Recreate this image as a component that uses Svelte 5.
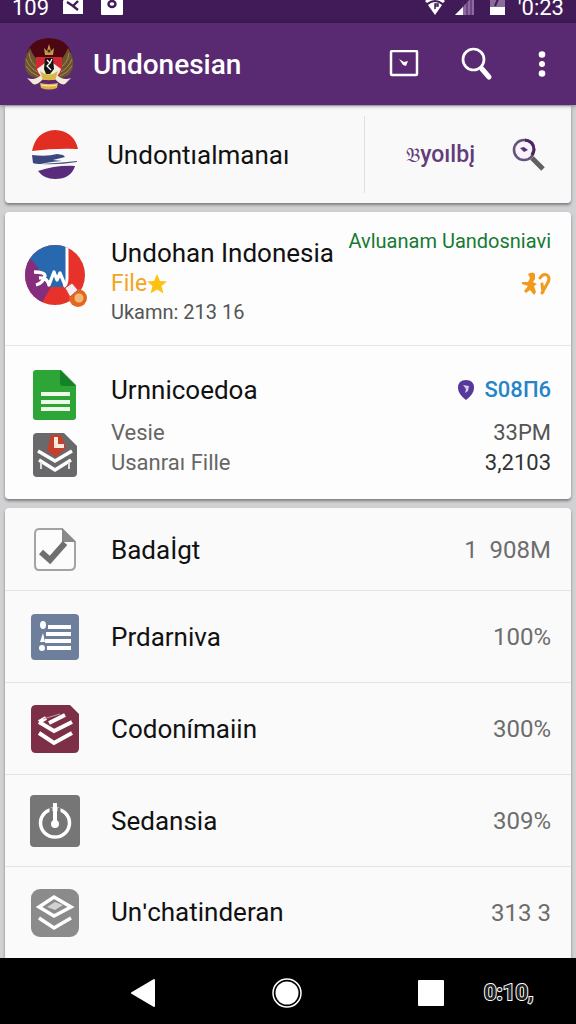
<script>
  const rows = [
    { icon: 'check', name: 'Badaİgt', value: '1  908M' },
    { icon: 'list', name: 'Prdarniva', value: '100%' },
    { icon: 'stack', name: 'Codonímaiin', value: '300%' },
    { icon: 'power', name: 'Sedansia', value: '309%' },
    { icon: 'layers', name: 'Unʹchatinderan', value: '313 3' },
  ];
</script>

<div class="screen">
  <div class="status">
    <span class="clock">109</span>
    <svg width="20" height="22" viewBox="0 0 20 22" aria-hidden="true">
      <path d="M5 1h15v20H0V8z" fill="#fff" />
      <path d="M4 9l6 4 5-5M10 13l5 4" stroke="#411a58" stroke-width="2.400" fill="none" />
    </svg>
    <svg class="second" width="22" height="22" viewBox="0 0 22 22" aria-hidden="true">
      <rect width="22" height="22" rx="1" fill="#fff" />
      <ellipse cx="11" cy="11" rx="3.5" ry="3" fill="none" stroke="#411a58" stroke-width="2.4" />
    </svg>
    <span class="fill"></span>
    <svg width="20" height="22" viewBox="0 0 20 22" aria-hidden="true">
      <path d="M0 8Q10-1 20 8l-2 2Q10 4 2 10z" fill="#fff" />
      <path d="M3 12q7-6 14 0l-7 10z" fill="#fff" />
      <path d="M10 16v-5h3v2h-3" stroke="#411a58" stroke-width="1.5" fill="none" />
    </svg>
    <svg class="signal" width="19" height="22" viewBox="0 0 19 22" aria-hidden="true">
      <path d="M0 22L19 2v20z" fill="#8d6b9f" />
      <path d="M0 22l8-8v8z" fill="#fff" />
      <path d="M8 8v6M12 4v18M16 2v20" stroke="#4d2665" />
    </svg>
    <svg class="battery" width="15" height="22" viewBox="0 0 15 22" aria-hidden="true">
      <path d="M0 0h15v14H0z" fill="#8b6b9b" />
      <path d="M8 6l-3 7" stroke="#411a58" stroke-width="2" />
      <path d="M0 14h15v8H0z" fill="#fff" />
    </svg>
    <span class="clock">'0:23</span>
  </div>

  <header>
    <svg class="crest" width="52" height="54" viewBox="0 0 52 54" aria-hidden="true">
      <path d="M4 16Q8 2 26 1q18 1 22 15L38 34H14z" fill="#4d0712" />
      <path d="M7 11Q-3 27 6 38l12 5 2-16q-9-5-13-16z" fill="#6d5430" />
      <path d="M45 11q10 16 1 27l-12 5-2-16q9-5 13-16z" fill="#6d5430" />
      <path d="M6 16q1 11 11 16M3 22q3 9 13 14M3 29q4 7 12 10M46 16q-1 11-11 16M49 22q-3 9-13 14M49 29q-4 7-12 10" fill="none" stroke="#a58b4c" stroke-width="1" />
      <path d="M21 11l3 3 2-7 2 7 3-3-1 7h-8z" fill="#c29a4c" />
      <circle cx="26" cy="14" r="1.500" fill="#5a2215" />
      <path d="M13 20h26v12q-2 9-13 12-11-3-13-12z" fill="#d52636" />
      <path d="M14 32l8-6h8l8 6q-2 8-12 11-10-3-12-11z" fill="#f3eee2" />
      <path d="M22 21h8l1 11-4 5h-4l-2-5z" fill="#171415" />
      <path d="M24 23l3 3-3 3 4 4M29 22l-2 4" stroke="#fff" stroke-width="1.3" fill="none" />
      <path d="M17 34q9 7 18 0l-3 9H20z" fill="#d7b846" />
      <path d="M4 41q8 3 14-3l2 4q-6 7-10 5zM48 41q-8 3-14-3l-2 4q6 7 10 5z" fill="#f2e9d7" />
      <path d="M17 46q9 2 18 0l-1 5q-8 3-16 0z" fill="#ddb348" />
      <path d="M18 48q8 2 16 0" stroke="#fff0ba" fill="none" />
    </svg>
    <h1>Undonesian</h1>
    <button class="box" aria-label="Inbox">
      <svg width="30" height="28" viewBox="0 0 30 28"><rect x="2" y="1" width="26" height="24" rx="1" fill="none" stroke="#fff" stroke-width="2.5" /><path d="M10 9l5 3 4-1-2 5-3-1z" fill="#fff" /></svg>
    </button>
    <button class="find" aria-label="Search">
      <svg width="32" height="34" viewBox="0 0 32 34"><circle cx="12.500" cy="12.500" r="10.500" fill="none" stroke="#fff" stroke-width="2.700" /><path d="M19 20l2 2" stroke="#fff" stroke-width="3" /><path d="M21 22l7 8" stroke="#fff" stroke-width="5" stroke-linecap="round" /></svg>
    </button>
    <button class="more" aria-label="More options">
      <svg width="8" height="28" viewBox="0 0 8 28"><g fill="#fff"><circle cx="4" cy="4.500" r="3.300" /><circle cx="4" cy="14" r="3" /><circle cx="4" cy="23.500" r="3.300" /></g></svg>
    </button>
  </header>

  <main>
    <section class="card search">
      <svg class="logo" width="46" height="50" viewBox="0 0 46 50" aria-hidden="true">
        <path d="M0 21Q4 1 23 0q19 1 23 19-23-1-46 2z" fill="#e22e22" />
        <path d="M0 25q15 2 25-1l6 1 2 2-12 3 9 1q-13 1-21 3Q3 34 1 33z" fill="#3c477f" />
        <path d="M9 34q18-1 36-3v1q-18 3-36 2z" fill="#4b5280" />
        <path d="M6 41q18-6 37-5-4 13-20 13-11 0-17-8z" fill="#582b7c" />
      </svg>
      <span class="query">Undontıalmanaı</span>
      <span class="word"><i>𝔅</i>yoılbį</span>
      <button aria-label="Search files">
        <svg width="34" height="34" viewBox="0 0 34 34"><path d="M20 20l11 11" stroke="#626063" stroke-width="5" /><circle cx="12" cy="12" r="10" fill="#f8f3fb" stroke="#65547c" stroke-width="2.600" /><path d="M13 2q9 1 9 10l-2 5" fill="none" stroke="#4b2461" stroke-width="3" /><path d="M8 10l4-1 4 3-4 2z" fill="#5b3177" /></svg>
      </button>
    </section>

    <section class="card">
      <article class="file">
        <div class="art">
          <svg class="app" width="64" height="66" viewBox="0 0 64 66" aria-hidden="true">
            <defs><clipPath id="disc"><circle cx="30" cy="31" r="30" /></clipPath></defs>
            <g clip-path="url(#disc)">
              <path d="M0 0h60v62H0z" fill="#e7312b" />
              <path d="M0 0h42v43H26L0 18z" fill="#2868ae" />
              <path d="M0 12l8 5 18 26-11 19H0z" fill="#862d7e" />
              <path d="M42 0v34q0 6-3 9" stroke="#fff" stroke-width="3" fill="none" />
            </g>
            <path d="M9 28q11 0 11 4-2 7-9 9M14 34q8-1 10 7l5-13 3 8 3-7 5 12" fill="none" stroke="#fff" stroke-width="3.300" stroke-linejoin="round" />
            <circle cx="53" cy="54" r="9" fill="#e16822" /><circle cx="54" cy="54" r="4.500" fill="#f3b878" />
            <path d="M40 44l7-5 6 7-8 7z" fill="#f8edf0" stroke="#c94c3c" />
          </svg>
        </div>
        <div class="info">
          <h2>Undohan Indonesia</h2>
          <p class="tag">File<svg width="20" height="20" viewBox="0 0 20 20" aria-hidden="true"><path d="M10 0l3 7 7 .5-5.500 4.500 2 7.500L10 15.500 3.500 19.500l2-7.500L0 7.500 7 7z" fill="#fcc313" /></svg></p>
          <p class="meta">Ukamn: 213 16</p>
        </div>
        <div class="side">
          <span class="green">Avluanam Uandosniavi</span>
          <svg width="29" height="24" viewBox="0 0 29 24" role="img" aria-label="37"><path d="M6 2q5-3 7 0v5l-2 3 4 2-3 2 2 6-2 3-4-5-4 3-2-2 4-5-6-2v-2h6l2-4z" fill="#f09b1c" /><path d="M18 6q3-5 7-3 4 3 0 9l-5 9M20 12l1 8" fill="none" stroke="#f09b1c" stroke-width="3" stroke-linecap="round" /></svg>
        </div>
      </article>
      <article class="file detail">
        <div class="art">
          <svg width="44" height="50" viewBox="0 0 44 50" aria-hidden="true"><path d="M3 0h25l15 15v32q0 3-3 3H3q-3 0-3-3V3q0-3 3-3z" fill="#2da537" /><path d="M27 0l16 16H30q-3 0-3-3z" fill="#16812a" /><path d="M8 24h29M8 32h29M8 39h29" stroke="#effbea" stroke-width="4" /></svg>
          <svg width="44" height="46" viewBox="0 0 44 46" aria-hidden="true"><path d="M4 1h27l13 13v27q0 4-4 4H4q-4 0-4-4V5q0-4 4-4z" fill="#69696b" /><path d="M18 3h10l5 13-10 9-9-6z" fill="#c63f2c" /><path d="M23 5v9h8" stroke="#ffe9d8" stroke-width="4" fill="none" /><path d="M5 19l17 10 17-10M6 28l16 10 16-10" stroke="#fff" stroke-width="3.500" fill="none" /><path d="M8 30v7M36 30v7" stroke="#ddd" stroke-width="2" /></svg>
        </div>
        <div class="info">
          <h2>Urnnicoedoa</h2>
          <p>Vesie</p>
          <p>Usanraı Fille</p>
        </div>
        <div class="side">
          <span class="blue"><svg width="18" height="22" viewBox="0 0 18 22" aria-hidden="true"><path d="M9 1q8 0 8 8 0 6-8 12Q1 15 1 9q0-8 8-8z" fill="#55399b" /><path d="M6 6l6 1-1 5-3 2 1-4z" fill="#d9cbed" /></svg>S08П6</span>
          <span>33PM</span>
          <span class="dark">3,2103</span>
        </div>
      </article>
    </section>

    <ul class="card list">
      {#each rows as row}
        <li>
          <span class="art">
            {#if row.icon === 'check'}
              <svg width="44" height="46" viewBox="0 0 44 46" aria-hidden="true"><path d="M6 2h23l13 13v23q0 5-5 5H6q-4 0-4-5V7q0-5 4-5z" fill="#fcfcfc" stroke="#a3a3a3" stroke-width="2" /><path d="M29 1l14 14H29z" fill="#898989" /><path d="M8 25l9 8 15-17" fill="none" stroke="#6f6f6f" stroke-width="6" /></svg>
            {:else if row.icon === 'list'}
              <svg width="48" height="46" viewBox="0 0 48 46" aria-hidden="true"><rect width="48" height="46" rx="4" fill="#6e7f9c" /><path d="M17 13h23M15 20h25M14 27h26M16 34h24" stroke="#fff" stroke-width="4" /><ellipse cx="12" cy="11" rx="3" ry="4" fill="#fff" /><path d="M12 19l-3 9h5z" fill="#fff" /><circle cx="11" cy="34" r="3" fill="#fff" /></svg>
            {:else if row.icon === 'stack'}
              <svg width="48" height="48" viewBox="0 0 48 48" aria-hidden="true"><path d="M5 0h34l9 9v34q0 5-5 5H5q-5 0-5-5V5q0-5 5-5z" fill="#7d2f48" /><path d="M8 17l15 9 18-9M8 28l15 10 18-10" stroke="#fff" stroke-width="4" fill="none" /><path d="M18 18l16-8M8 17l7-4" stroke="#fff" stroke-width="4" /><path d="M12 14l17-5" stroke="#c99baa" /></svg>
            {:else if row.icon === 'power'}
              <svg width="50" height="52" viewBox="0 0 50 52" aria-hidden="true"><rect width="50" height="52" rx="4" fill="#767676" /><ellipse cx="25" cy="28" rx="14.500" ry="14" stroke="#fff" stroke-width="3.500" fill="none" /><path d="M21 13v8M29 13v8" stroke="#767676" stroke-width="3" /><path d="M25 8v20" stroke="#fff" stroke-width="4" /><circle cx="25" cy="29" r="4" fill="#fff" /></svg>
            {:else}
              <svg width="48" height="48" viewBox="0 0 48 48" aria-hidden="true"><rect width="48" height="48" rx="9" fill="#8b8b8b" /><path d="M8 18L23 8l17 10-17 9zM8 29l15 10 17-10" fill="none" stroke="#fff" stroke-width="3.500" /><path d="M16 18l8-5 8 3-8 5z" fill="#d2d2d2" /></svg>
            {/if}
          </span>
          <span class="name">{row.name}</span>
          <span class="value">{row.value}</span>
        </li>
      {/each}
    </ul>
  </main>

  <nav>
    <button aria-label="Back"><svg width="26" height="30" viewBox="0 0 26 30"><path d="M2 15L24 2v26z" fill="#fff" stroke="#fff" stroke-width="2" stroke-linejoin="round" /></svg></button>
    <button aria-label="Home"><svg width="32" height="32" viewBox="0 0 32 32"><circle cx="16" cy="16" r="14" fill="none" stroke="#fff" stroke-width="1.500" /><circle cx="16" cy="16" r="11.500" fill="#fff" /></svg></button>
    <button aria-label="Recent apps"><svg width="26" height="26" viewBox="0 0 26 26"><rect width="26" height="26" rx="1" fill="#fff" /></svg></button>
    <span class="count">0:10,</span>
  </nav>
</div>

<style>
  :global(body) { margin: 0; background: #d1d1d3; }
  .screen { box-sizing: border-box; min-height: 100vh; display: flex; flex-direction: column; font-family: Roboto, sans-serif; color: #111; }
  h1, h2, p, ul { margin: 0; padding: 0; font-weight: 400; }
  svg { display: block; flex: none; }
  button { border: 0; padding: 0; background: none; display: flex; cursor: pointer; }
  .status { height: 15px; padding: 0 12px 8px; overflow: hidden; display: flex; align-items: flex-end; background: #411a58; color: #fff; }
  .clock { font-size: 22px; line-height: 20px; margin-bottom: -3px; }
  .clock:first-child { width: 51px; }
  .second { margin-left: 18px; }
  .fill { flex: 1; }
  .signal { margin-left: 10px; }
  .battery { margin: 0 13px 0 16px; }
  header { height: 82px; padding: 0 30px 0 23px; display: flex; align-items: center; background: #592971; color: #fff; position: relative; box-shadow: 0 1px 4px #0006; }
  .crest { margin-right: 18px; }
  h1 { flex: 1; font-size: 28px; line-height: 36px; padding-top: 2px; font-weight: 500; }
  .find { margin: 0 45px 0 42px; }
  main { flex: 1; display: flex; flex-direction: column; gap: 9px; padding: 1px 5px 0; }
  .card { background: #fdfdfd; border-radius: 4px; box-shadow: 0 2px 3px #0006; }
  .search { height: 97px; display: flex; align-items: center; padding: 0 25px 0 27px; border-radius: 0 0 4px 4px; background: #f9f9f9; }
  .logo { margin-right: 29px; }
  .query { flex: 1; font-size: 26px; }
  .word { height: 77px; padding-left: 41px; margin-right: 37px; border-left: 1px solid #e0e0e0; display: flex; align-items: center; font-size: 23px; font-weight: 500; color: #643c7c; }
  .word i { font: 20px "DejaVu Sans", sans-serif; }
  .file { display: flex; padding: 25px 20px 20px 26px; border-bottom: 1px solid #e6e6e8; }
  .detail { padding-top: 28px; border: 0; padding-bottom: 21px; }
  .art { width: 48px; margin-right: 32px; display: flex; flex: none; flex-direction: column; align-items: center; }
  .app { margin: 7px 0 0 4px; }
  .info { flex: 1; white-space: nowrap; }
  h2 { font-size: 26px; line-height: 32px; }
  .tag { display: flex; align-items: center; font-size: 23px; line-height: 30px; color: #f3a51d; }
  .meta { font-size: 20px; line-height: 26px; color: #555; }
  .side { display: flex; flex-direction: column; align-items: flex-end; white-space: nowrap; }
  .green { margin: -11px 0 16px -100px; font-size: 20px; line-height: 30px; color: #167a32; }
  .detail .art { margin-top: -4px; gap: 12px; }
  .detail h2, .blue { margin-bottom: 12px; }
  .detail p, .side span { line-height: 30px; }
  .detail p { font-size: 22px; color: #666; }
  .detail .side { font-size: 22px; color: #555; }
  .detail .blue { display: flex; align-items: center; gap: 10px; line-height: 32px; font-weight: 500; color: #2585c8; }
  .detail .dark { color: #333; }
  .list { flex: 1; display: grid; grid-template-rows: 82px repeat(4, minmax(91px, 1fr)); list-style: none; border-radius: 4px 4px 0 0; background: #fafafa; }
  li { display: flex; align-items: center; padding: 0 20px 0 26px; border-top: 1px solid #e4e4e6; font-size: 26px; }
  li:first-child { border-color: transparent; }
  .name { flex: 1; }
  .value { color: #6d6d6d; font-size: 24px; white-space: pre; }
  nav { box-sizing: border-box; height: 66px; display: flex; align-items: center; gap: 115px; padding: 3px 46px 0 130px; background: #000; position: relative; }
  .count { margin-left: -75px; font-size: 22px; font-weight: 700; color: #222; -webkit-text-stroke: 2px #fff; paint-order: stroke fill; }
</style>
